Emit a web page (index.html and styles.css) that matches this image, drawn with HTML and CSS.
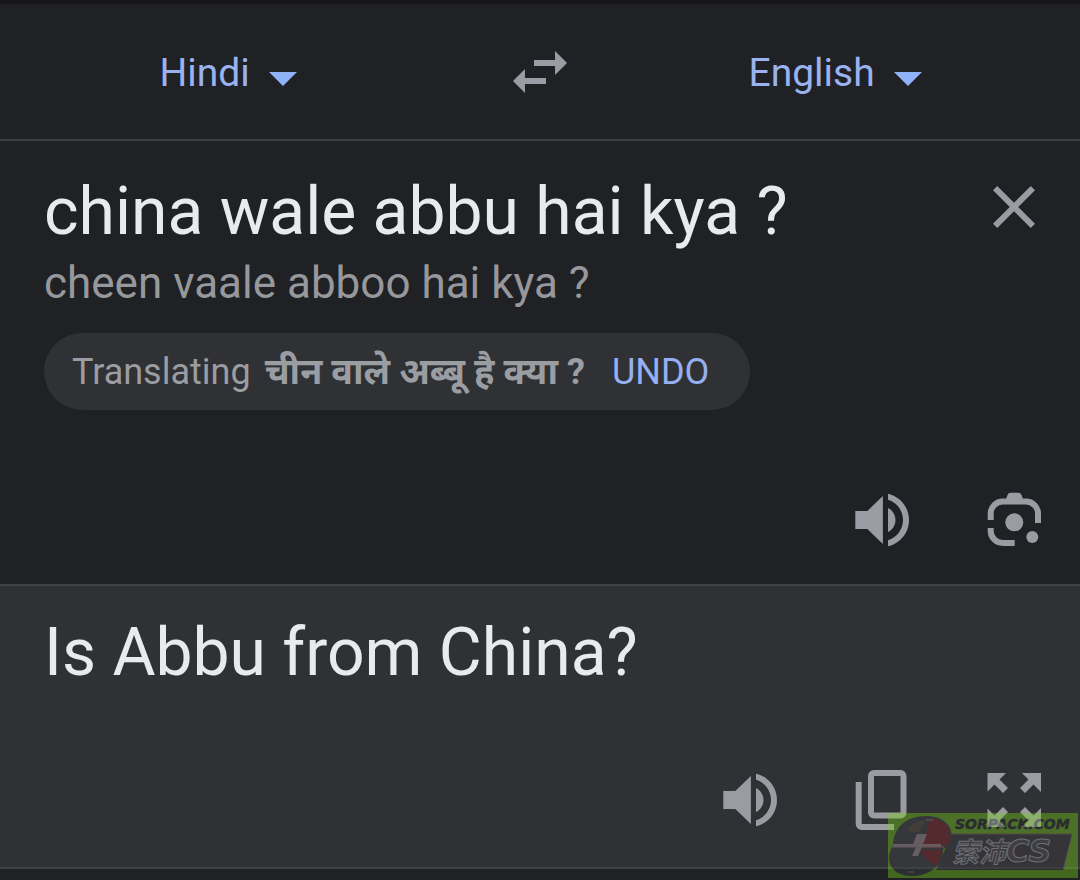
FILE: index.html
```html
<!DOCTYPE html>
<html lang="en">
<head>
<meta charset="utf-8">
<meta name="viewport" content="width=device-width, initial-scale=1">
<title>Translate</title>
<link rel="stylesheet" href="styles.css">
</head>
<body>
<main class="translator">
  <header class="languages">
    <label class="language language-from">
      <select class="language-select" aria-label="Source language"><option>Hindi</option></select>
      <svg class="caret" viewBox="0 0 28 14" aria-hidden="true"><path d="M0 0h28L14 14z"/></svg>
    </label>
    <button class="icon-button" type="button" aria-label="Swap languages">
      <svg class="icon" viewBox="0 0 24 24"><path d="M6.99 11L3 15l3.99 4v-3H14v-2H6.99v-3zM21 9l-3.99-4v3H10v2h7.01v3L21 9z"/></svg>
    </button>
    <label class="language language-to">
      <select class="language-select" aria-label="Target language"><option>English</option></select>
      <svg class="caret" viewBox="0 0 28 14" aria-hidden="true"><path d="M0 0h28L14 14z"/></svg>
    </label>
  </header>

  <section class="source">
    <div class="source-top">
      <div class="source-content">
        <textarea class="phrase" rows="1" aria-label="Source text" spellcheck="false">china wale abbu hai kya ?</textarea>
        <p class="romanized">cheen vaale abboo hai kya ?</p>
        <div class="chip">
          <span>Translating</span>
          <b class="chip-text" lang="hi">चीन वाले अब्बू है क्या ?</b>
          <button class="undo" type="button">UNDO</button>
        </div>
      </div>
      <button class="icon-button" type="button" aria-label="Clear text">
        <svg class="icon" viewBox="0 0 24 24"><path d="M19 6.41L17.59 5 12 10.59 6.41 5 5 6.41 10.59 12 5 17.59 6.41 19 12 13.41 17.59 19 19 17.59 13.41 12z"/></svg>
      </button>
    </div>
    <div class="actions">
      <button class="icon-button" type="button" aria-label="Listen to source text">
        <svg class="icon" viewBox="0 0 24 24"><path d="M3.1 9v6h4l5.200 5V4L7.100 9h-4zm13.400 3c0-1.770-1.020-3.290-2.500-4.030v8.050c1.480-.73 2.500-2.250 2.500-4.020zM14 3.230v2.060c2.890.86 5 3.540 5 6.710s-2.110 5.850-5 6.710v2.060c4.010-.91 7-4.490 7-8.770s-2.990-7.860-7-8.770z"/></svg>
      </button>
      <button class="icon-button" type="button" aria-label="Translate with camera">
        <svg class="icon" viewBox="0 0 72 72">
          <path class="stroke" d="M12.700 36v-6.500a12 12 0 0 1 12-12H48a12 12 0 0 1 12 12V39M12.700 44v3a12 12 0 0 0 12 12h12"/>
          <path d="M27 18l2.500-7q.8-2.300 3-2.300h8q2.200 0 3 2.300l2.500 7z"/>
          <circle cx="36.300" cy="38.300" r="9"/>
          <circle cx="54.300" cy="53" r="6"/>
        </svg>
      </button>
    </div>
  </section>

  <section class="target">
    <p class="phrase">Is Abbu from China?</p>
    <div class="actions">
      <button class="icon-button" type="button" aria-label="Listen to translation">
        <svg class="icon" viewBox="0 0 24 24"><path d="M3.1 9v6h4l5.200 5V4L7.100 9h-4zm13.400 3c0-1.770-1.020-3.290-2.500-4.030v8.050c1.480-.73 2.500-2.250 2.500-4.020zM14 3.230v2.060c2.890.86 5 3.540 5 6.710s-2.110 5.850-5 6.710v2.060c4.010-.91 7-4.490 7-8.770s-2.990-7.860-7-8.770z"/></svg>
      </button>
      <button class="icon-button" type="button" aria-label="Copy translation">
        <svg class="icon" viewBox="0 0 72 72"><rect class="stroke" x="25" y="9" width="32.500" height="42.500" rx="3"/><path class="stroke" d="M12.700 18v42a3 3 0 0 0 3 3H48"/></svg>
      </button>
      <button class="icon-button" type="button" aria-label="Full screen">
        <svg class="icon" viewBox="0 0 72 72"><path d="M9.500 9H28l-6.500 6.500L30 24l-5 5-8.500-8.500-7 7zM63 9H44l6.500 6.500L42 24l5 5 8.500-8.500L63 28zM9.500 63H28l-6.500-6.500L30 48l-5-5-8.500 8.500-7-7zM63 63H44l6.500-6.500L42 48l5-5 8.500 8.500L63 44z"/></svg>
      </button>
    </div>
  </section>

  <svg class="watermark" viewBox="0 0 190 65" role="img" aria-label="SORPACK.COM 索沛CS">
    <rect width="190" height="65" fill="#78d018"/>
    <path d="M64 21H184L175 57H48z" fill="#3c3a42"/>
    <path d="M60 21H184L175 57" fill="none" stroke="#8b6670"/>
    <path d="M5 32C6 14 18 3 38 3c15 0 25 7 26 20 0 5-1 8-3 11L55 36C57 50 43 63 24 63 9 63 1 55 1 45c0-4 1-8 4-13z" fill="#3e4044"/>
    <path d="M42 5c14 2 22 9 20 23l-7 7H33l5-14zM32 37h22c-1 7-3 12-7 16l-9-7z" fill="#8c2029"/>
    <path d="M20 18q3-9 17-11l-6 12z" fill="#65523f"/>
    <path d="M29 21h10l-4 10h18v3H34l-4 9H24l4-9H5v-3h20z" fill="#b99ca5"/>
    <path d="M3 34h53M38 7h7M20 59h6" stroke="#a99aa0" fill="none"/>
    <text class="watermark-site" x="67" y="16">SORPACK.COM</text>
    <text class="watermark-name" x="64" y="49">索沛<tspan class="watermark-suffix">CS</tspan></text>
  </svg>
</main>
</body>
</html>
```
FILE: styles.css
```css
* {
  box-sizing: border-box;
}

body {
  margin: 0;
  background: #202124;
  color: #e8eaed;
  font-family: Roboto, "Noto Sans", sans-serif;
}

p {
  margin: 0;
}

button,
select,
textarea {
  margin: 0;
  padding: 0;
  border: 0;
  background: none;
  font-family: inherit;
}

.translator {
  position: relative;
  min-height: 100vh;
  border-top: 4px solid #171719;
}

.languages {
  display: grid;
  grid-template-columns: 1fr auto 1fr;
  align-items: center;
  padding: 32px 0 31px;
  border-bottom: 2px solid #3c4043;
}

.language {
  display: flex;
  align-items: center;
  justify-content: center;
  gap: 18px;
  padding-top: 2px;
}

.language-from {
  padding-right: 48px;
}

.language-to {
  padding-left: 14px;
}

.language-select {
  appearance: none;
  color: #9ab3f0;
  font-size: 39px;
  line-height: 48px;
}

.caret {
  width: 28px;
  height: 14px;
  margin-top: 12px;
  fill: #8fb2f8;
}

.icon-button {
  flex: none;
  width: 72px;
  height: 72px;
  color: #9a9ca3;
}

.icon {
  display: block;
  width: 72px;
  height: 72px;
  fill: currentColor;
}

.stroke {
  fill: none;
  stroke: currentColor;
  stroke-width: 6;
}

.source {
  padding: 30px 30px 28px 44px;
  border-bottom: 2px solid #3f4145;
}

.source-top {
  display: flex;
}

.source-content {
  flex: 1;
  min-width: 0;
}

.phrase {
  display: block;
  width: 100%;
  color: #e8eaed;
  font-size: 66px;
  line-height: 82px;
}

textarea.phrase {
  height: 82px;
  overflow: hidden;
  resize: none;
}

.romanized {
  color: #96989c;
  font-size: 44px;
  line-height: 60px;
}

.chip {
  display: inline-flex;
  align-items: center;
  height: 77px;
  margin-top: 20px;
  padding: 0 41px 0 28px;
  border-radius: 39px;
  background: #303134;
  color: #9a9da2;
  font-size: 36px;
  line-height: 48px;
}

.chip-text {
  margin: 0 27px 0 14px;
}

.undo {
  color: #94b0f2;
  font-size: 36px;
  line-height: 48px;
}

.actions {
  display: flex;
  justify-content: flex-end;
  gap: 60px;
}

.source .actions {
  margin-top: 74px;
}

.target {
  padding: 26px 30px 31px 44px;
  border-bottom: 2px solid #3f4145;
  background: #303134;
}

.target .actions {
  margin-top: 70px;
}

.watermark {
  position: absolute;
  right: 2px;
  bottom: 2px;
  width: 190px;
  height: 65px;
  opacity: 0.4;
  pointer-events: none;
}

.watermark-site {
  fill: #24252c;
  stroke: #24252c;
  stroke-width: 0.5;
  font: italic bold 14px "DejaVu Sans", sans-serif;
}

.watermark-name {
  fill: #55555a;
  stroke: #c8c8cc;
  stroke-width: 1;
  font: italic bold 27px "Noto Sans CJK SC", sans-serif;
}

.watermark-suffix {
  font: italic bold 32px "DejaVu Sans", sans-serif;
}
```
